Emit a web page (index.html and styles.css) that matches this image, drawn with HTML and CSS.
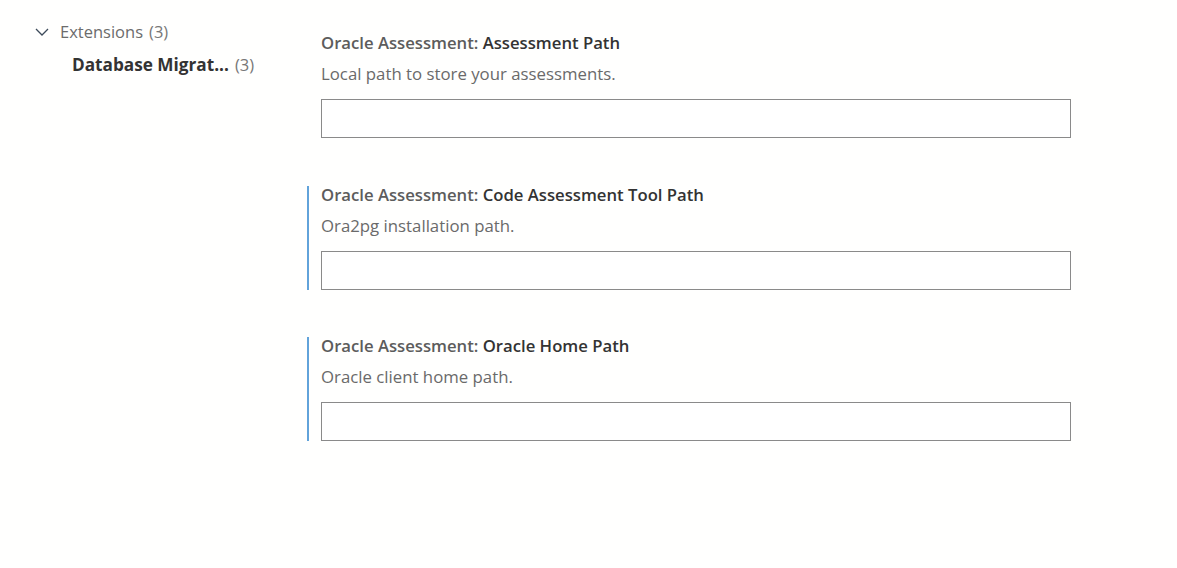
FILE: index.html
```html
<!DOCTYPE html>
<html>
<head>
<meta charset="utf-8">
<link rel="stylesheet" href="styles.css">
</head>
<body>
<div class="page">
  <nav class="toc">
    <div class="toc-row toc-group">
      <svg class="chev" width="14" height="10" viewBox="0 0 14 10"><path d="M1 2 L7 8 L13 2" fill="none" stroke="#3c4a5a" stroke-width="1.3"/></svg>
      <span class="toc-label">Extensions</span><span class="count">(3)</span>
    </div>
    <div class="toc-row toc-child">
      <span class="toc-label bold">Database Migrat...</span><span class="count">(3)</span>
    </div>
  </nav>
  <main class="settings">
    <section class="item">
      <div class="title"><span class="cat">Oracle Assessment: </span><span class="name">Assessment Path</span></div>
      <div class="desc">Local path to store your assessments.</div>
      <input class="field" type="text">
    </section>
    <section class="item marked">
      <div class="title"><span class="cat">Oracle Assessment: </span><span class="name">Code Assessment Tool Path</span></div>
      <div class="desc">Ora2pg installation path.</div>
      <input class="field" type="text">
    </section>
    <section class="item marked">
      <div class="title"><span class="cat">Oracle Assessment: </span><span class="name">Oracle Home Path</span></div>
      <div class="desc">Oracle client home path.</div>
      <input class="field" type="text">
    </section>
  </main>
</div>
</body>
</html>
```
FILE: styles.css
```css
html, body {
  margin: 0;
  padding: 0;
  background: #fffffe;
  font-family: "Open Sans", "Noto Sans", sans-serif;
}
.page {
  display: flex;
  height: 568px;
}
.toc {
  width: 307px;
  flex: none;
  padding-top: 15px;
  box-sizing: border-box;
}
.toc-row {
  display: flex;
  align-items: center;
  height: 33px;
  font-size: 16.5px;
  white-space: nowrap;
}
.toc-group {
  padding-left: 35px;
  color: #6c6c6c;
}
.chev {
  margin-right: 11px;
}
.toc-child {
  padding-left: 72px;
}
.toc-label.bold {
  font-weight: 700;
  color: #333;
  font-size: 17.2px;
}
.count {
  color: #777;
  margin-left: 6px;
}
.settings {
  display: flex;
  flex-direction: column;
  gap: 47.5px;
  padding-top: 34px;
}
.item {
  border-left: 2px solid transparent;
  padding-left: 12px;
  display: flex;
  flex-direction: column;
}
.item.marked {
  border-left-color: #62a3da;
}
.title {
  font-size: 16.7px;
  line-height: 18px;
  font-weight: 600;
  color: #333;
}
.title .cat {
  color: #5c5c5c;
}
.desc {
  margin-top: 12px;
  font-size: 16.8px;
  line-height: 19px;
  color: #6a6a6a;
}
.field {
  margin: 16px 0 0 0;
  width: 750px;
  height: 39px;
  box-sizing: border-box;
  border: 1px solid #8a8a8a;
  background: #fff;
  padding: 0;
  outline: none;
}
```
